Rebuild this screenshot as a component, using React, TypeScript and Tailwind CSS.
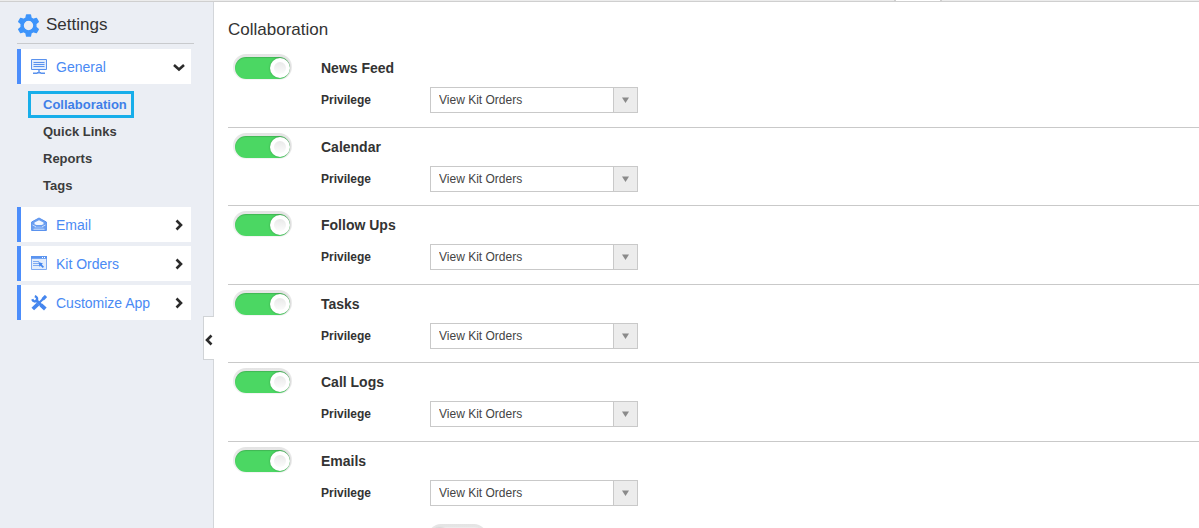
import React, { useState } from 'react';

const sections = ['News Feed', 'Calendar', 'Follow Ups', 'Tasks', 'Call Logs', 'Emails'];
const generalLinks = ['Collaboration', 'Quick Links', 'Reports', 'Tags'];

const GearIcon = () => (
    <svg className="h-[23px] w-[23px]" viewBox="0 0 24 24" fill="#3d94fb">
        <path
            fillRule="evenodd"
            stroke="#3d94fb"
            strokeWidth="1.4"
            strokeLinejoin="round"
            d="M10 1h4l.7 3.3 2.3 1.3 3.2-1.1 2 3.5-2.5 2.2v3.6l2.5 2.2-2 3.5-3.2-1.1-2.3 1.3L14 23h-4l-.7-3.3L7 18.4l-3.2 1.1-2-3.5 2.5-2.2v-3.6L1.8 8l2-3.5L7 5.6l2.3-1.3zM12 6.4a5.6 5.6 0 1 0 0 11.2a5.6 5.6 0 1 0 0-11.2z"
        />
    </svg>
);

const MonitorIcon = () => (
    <svg className="h-4 w-4" viewBox="0 0 16 16" fill="none" stroke="#5a92ee">
        <path fill="#e3edfc" d="M.5.5h15v10H.5z" />
        <path d="M2.5 3.5h11M2.5 5.5h11M2.5 7.5h11" />
        <path strokeWidth="1.4" d="M8 10.5v3.500M2 14.3h4.500M9.500 14.300H14M6 13.800h4" />
    </svg>
);

const EnvelopeIcon = () => (
    <svg className="h-4 w-4" viewBox="0 0 16 16" fill="none">
        <path fill="#6b9ef0" stroke="#5a92ee" strokeLinejoin="round" d="M.6 5L8 1l7.400 4v8.500H.6z" />
        <path fill="#f2f7ff" d="M3.500 5.500L8 3.200l4.500 2.300v1.700L10.500 8h-5l-2-.8z" />
        <path fill="#8ab3f5" d="M5 9.500h6l2.500 2h-11z" />
        <path stroke="#dbe8fd" strokeWidth=".8" d="M1.500 8l3.500 1.800M14.500 8L11 9.800M2.500 12.300h11" />
    </svg>
);

const WindowIcon = () => (
    <svg className="h-4 w-4" viewBox="0 0 16 16" fill="none">
        <path fill="#e3edfc" stroke="#7fabf3" d="M.5 1.500h15v12H.5z" />
        <path fill="#5b94f0" d="M0 0h16v2.800H0z" />
        <path fill="#fff" d="M11 1h1v1h-1zM13 1h1v1h-1z" />
        <path stroke="#7fabf3" d="M2 5.500h6M2 7.500h6M2 9.500h7" />
        <path fill="#4586ee" d="M7.500 6l4.500 1.500-1.300 1 2.300 2.300-1.200 1.200-2.300-2.300-.8 1.300z" />
    </svg>
);

const ToolsIcon = () => (
    <svg className="h-4 w-4" viewBox="0 0 16 16" fill="none" stroke="#4586ee">
        <path strokeWidth="3" d="M5 5l8 8" />
        <path strokeWidth="2.400" d="M3.800 1.200c2.200.6 3 2.500 1.800 4.100S2.400 7 1.200 4.300" />
        <path strokeWidth="3.800" d="M9.800 9.800l4.500 4.200" />
        <path strokeWidth="2.200" d="M13.500 2.500L8 8" />
        <path strokeWidth="3.200" d="M15 1l-3.300 3.300" />
        <path strokeWidth="3.800" d="M7.200 8.800L1.800 14" />
    </svg>
);

const chevronPaths = {
    down: 'M1 4l5 4.500L11 4',
    right: 'M3.500 1.500L8 6l-4.500 4.500',
    left: 'M8.500 1.500L4 6l4.500 4.500',
};

const Chevron = ({ direction }: { direction: keyof typeof chevronPaths }) => (
    <svg className="h-3 w-3 shrink-0" viewBox="0 0 12 12" fill="none" stroke="#2b2b2b" strokeWidth="2.6">
        <path d={chevronPaths[direction]} />
    </svg>
);

interface MenuItemProps {
    icon: React.ReactNode;
    label: string;
    open?: boolean;
}

const MenuItem: React.FC<MenuItemProps> = ({ icon, label, open = false }) => (
    <button
        type="button"
        aria-expanded={open}
        className="flex h-[35px] w-full items-center border-l-4 border-[#4c8dfb] bg-white pl-[10px] pr-[6px] text-left text-sm text-[#4a8af4]"
    >
        {icon}
        <span className="ml-[9px] flex-1">{label}</span>
        <Chevron direction={open ? 'down' : 'right'} />
    </button>
);

const Toggle: React.FC<{ label: string; initial?: boolean }> = ({ label, initial = false }) => {
    const [on, setOn] = useState(initial);

    return (
        <label className="block h-[26px] w-[59px] rounded-full bg-gradient-to-b from-[#e4e4e4] to-[#f4f4f4] px-[2px] pt-[3px] pb-px">
            <input
                type="checkbox"
                role="switch"
                aria-label={label}
                className="peer sr-only"
                checked={on}
                onChange={(e) => setOn(e.target.checked)}
            />
            <span className="flex h-[22px] items-center rounded-full bg-[#ececec] peer-checked:justify-end peer-checked:bg-[#4bd763] peer-checked:shadow-[inset_0_1px_1px_rgba(0,0,0,0.15)]">
                <span className="flex h-5 w-5 items-center justify-center rounded-full bg-white shadow-[0_0_2px_rgba(0,0,0,0.3)]">
                    <span className="h-3 w-3 rounded-full bg-gradient-to-b from-[#e9e9e9] to-[#fbfbfb]" />
                </span>
            </span>
        </label>
    );
};

const PrivilegeSelect: React.FC<{ id: string }> = ({ id }) => (
    <div className="relative w-[208px]">
        <select
            id={id}
            className="block h-[26px] w-full appearance-none rounded-none border border-[#c9c9c9] bg-white pl-2 pr-8 text-xs text-[#444]"
        >
            <option>View Kit Orders</option>
        </select>
        <span className="pointer-events-none absolute inset-y-px right-px flex w-6 items-center justify-center border-l border-[#c9c9c9] bg-[#ececec]">
            <svg className="h-[6px] w-[7px]" viewBox="0 0 7 6" fill="#8a8a8a">
                <path d="M0 .5h7L3.500 6z" />
            </svg>
        </span>
    </div>
);

const App: React.FC = () => {
    return (
        <div className="flex h-screen flex-col overflow-hidden bg-white font-['Liberation_Sans',Arial,sans-serif] text-[#333]">
            <div className="flex h-[2px] shrink-0 justify-end border-b border-[#cfcfcf] bg-[#ececec] pr-[257px]">
                <span className="w-12 border-x-2 border-[#cfcfcf] bg-white" />
            </div>

            <div className="flex min-h-0 flex-1">
                <aside className="relative w-[214px] shrink-0 border-r border-[#d3d6da] bg-[#ebeef4] pl-[17px] pt-[10px]">
                    <div className="mr-[19px] flex h-8 items-center gap-[6px] border-b border-[#c8cacd] pb-[5px]">
                        <GearIcon />
                        <h1 className="text-[17px] leading-6">Settings</h1>
                    </div>

                    <nav className="mr-[22px] mt-[5px]">
                        <MenuItem icon={<MonitorIcon />} label="General" open />
                        <ul className="mb-2 ml-[11px] mt-[7px] text-[13px] font-bold leading-[21px]">
                            {generalLinks.map((link, i) => (
                                <li key={link} className="flex">
                                    <a
                                        href="#"
                                        className={i === 0
                                            ? 'border-[3px] border-[#17aeea] px-3 pr-1 text-[#3f7fe8]'
                                            : 'border-[3px] border-transparent pl-3 text-[#3c3c3c]'}
                                    >
                                        {link}
                                    </a>
                                </li>
                            ))}
                        </ul>
                        <div className="flex flex-col gap-1">
                            <MenuItem icon={<EnvelopeIcon />} label="Email" />
                            <MenuItem icon={<WindowIcon />} label="Kit Orders" />
                            <MenuItem icon={<ToolsIcon />} label="Customize App" />
                        </div>
                    </nav>

                    {/* sidebar handle, sits over the border */}
                    <button
                        type="button"
                        aria-label="Collapse sidebar"
                        className="absolute -right-px top-[314px] flex h-11 w-[11px] items-center justify-center border-y border-l border-[#d0d3d6] bg-white pt-1"
                    >
                        <Chevron direction="left" />
                    </button>
                </aside>

                <main className="min-w-0 flex-1 pl-[14px] pt-4">
                    <h2 className="mb-[7px] text-[17px] leading-6">Collaboration</h2>

                    {sections.map((name, i) => {
                        const id = `privilege-${i}`;
                        return (
                            <section
                                key={name}
                                className="flex border-b border-[#c9c9c9] pb-[13px] pl-[5px] pt-[5px] last-of-type:border-transparent even:pb-[14px]"
                            >
                                <Toggle label={name} initial />
                                <div className="ml-[29px]">
                                    <h3 className="pt-1 text-sm font-bold leading-5">{name}</h3>
                                    <div className="mt-[9px] flex items-center">
                                        <label htmlFor={id} className="w-[109px] text-xs font-bold">Privilege</label>
                                        <PrivilegeSelect id={id} />
                                    </div>
                                </div>
                            </section>
                        );
                    })}

                    <div className="pl-[200px] pt-1">
                        <Toggle label="Emails option" />
                    </div>
                </main>
            </div>
        </div>
    );
};

export default App;
